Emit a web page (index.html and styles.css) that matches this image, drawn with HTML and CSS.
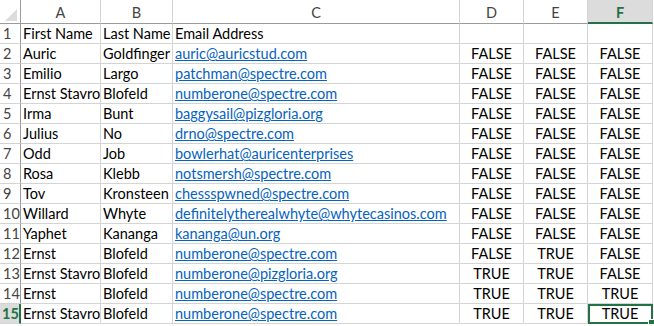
FILE: index.html
```html
<!DOCTYPE html>
<html>
<head>
<meta charset="utf-8">
<link rel="stylesheet" href="styles.css">
</head>
<body>
<div class="sheet">
  <div class="hd corner"><svg width="20" height="23" viewBox="0 0 20 23"><polygon points="17,9 17,21 5,21" fill="#dcdcdc"/></svg></div>
  <div class="hd col">A</div>
  <div class="hd col">B</div>
  <div class="hd col">C</div>
  <div class="hd col">D</div>
  <div class="hd col">E</div>
  <div class="hd col sel">F</div>

  <div class="rh">1</div><div class="c">First Name</div><div class="c">Last Name</div><div class="c">Email Address</div><div class="c"></div><div class="c"></div><div class="c"></div>
  <div class="rh">2</div><div class="c">Auric</div><div class="c">Goldfinger</div><div class="c"><span class="lnk">auric@auricstud.com</span></div><div class="c b">FALSE</div><div class="c b">FALSE</div><div class="c b">FALSE</div>
  <div class="rh">3</div><div class="c">Emilio</div><div class="c">Largo</div><div class="c"><span class="lnk">patchman@spectre.com</span></div><div class="c b">FALSE</div><div class="c b">FALSE</div><div class="c b">FALSE</div>
  <div class="rh">4</div><div class="c">Ernst Stavro</div><div class="c">Blofeld</div><div class="c"><span class="lnk">numberone@spectre.com</span></div><div class="c b">FALSE</div><div class="c b">FALSE</div><div class="c b">FALSE</div>
  <div class="rh">5</div><div class="c">Irma</div><div class="c">Bunt</div><div class="c"><span class="lnk">baggysail@pizgloria.org</span></div><div class="c b">FALSE</div><div class="c b">FALSE</div><div class="c b">FALSE</div>
  <div class="rh">6</div><div class="c">Julius</div><div class="c">No</div><div class="c"><span class="lnk">drno@spectre.com</span></div><div class="c b">FALSE</div><div class="c b">FALSE</div><div class="c b">FALSE</div>
  <div class="rh">7</div><div class="c">Odd</div><div class="c">Job</div><div class="c"><span class="lnk">bowlerhat@auricenterprises</span></div><div class="c b">FALSE</div><div class="c b">FALSE</div><div class="c b">FALSE</div>
  <div class="rh">8</div><div class="c">Rosa</div><div class="c">Klebb</div><div class="c"><span class="lnk">notsmersh@spectre.com</span></div><div class="c b">FALSE</div><div class="c b">FALSE</div><div class="c b">FALSE</div>
  <div class="rh">9</div><div class="c">Tov</div><div class="c">Kronsteen</div><div class="c"><span class="lnk">chessspwned@spectre.com</span></div><div class="c b">FALSE</div><div class="c b">FALSE</div><div class="c b">FALSE</div>
  <div class="rh">10</div><div class="c">Willard</div><div class="c">Whyte</div><div class="c"><span class="lnk">definitelytherealwhyte@whytecasinos.com</span></div><div class="c b">FALSE</div><div class="c b">FALSE</div><div class="c b">FALSE</div>
  <div class="rh">11</div><div class="c">Yaphet</div><div class="c">Kananga</div><div class="c"><span class="lnk">kananga@un.org</span></div><div class="c b">FALSE</div><div class="c b">FALSE</div><div class="c b">FALSE</div>
  <div class="rh">12</div><div class="c">Ernst</div><div class="c">Blofeld</div><div class="c"><span class="lnk">numberone@spectre.com</span></div><div class="c b">FALSE</div><div class="c b">TRUE</div><div class="c b">FALSE</div>
  <div class="rh">13</div><div class="c">Ernst Stavro</div><div class="c">Blofeld</div><div class="c"><span class="lnk">numberone@pizgloria.org</span></div><div class="c b">TRUE</div><div class="c b">TRUE</div><div class="c b">FALSE</div>
  <div class="rh">14</div><div class="c">Ernst</div><div class="c">Blofeld</div><div class="c"><span class="lnk">numberone@spectre.com</span></div><div class="c b">TRUE</div><div class="c b">TRUE</div><div class="c b">TRUE</div>
  <div class="rh selr">15</div><div class="c">Ernst Stavro</div><div class="c">Blofeld</div><div class="c"><span class="lnk">numberone@spectre.com</span></div><div class="c b">TRUE</div><div class="c b">TRUE</div><div class="c b active">TRUE<span class="handle"></span></div>
</div>
</body>
</html>
```
FILE: styles.css
```css
html, body {
  margin: 0;
  padding: 0;
  background: #ffffff;
}
.sheet {
  display: grid;
  grid-template-columns: 21px 80px 72px 287px 64px 64px 65px;
  grid-template-rows: 24px repeat(15, 20px);
  font-family: Lato, "Open Sans", sans-serif;
  font-size: 14.5px;
  color: #000;
  width: 654px;
}
.hd, .rh, .c {
  box-sizing: border-box;
  overflow: visible;
  white-space: nowrap;
}
.hd {
  border-right: 1px solid #d4d4d4;
  border-bottom: 1px solid #9b9b9b;
  color: #444;
  text-align: center;
  line-height: 22px;
  padding-top: 2px;
}
.corner {
  border-right: 1px solid #9b9b9b;
  padding: 0;
  line-height: 0;
}
.corner svg { display: block; }
.hd.sel {
  background: #dcdcdc;
  color: #217346;
  font-weight: bold;
  border-bottom: 2px solid #217346;
  line-height: 21px;
}
.rh {
  border-right: 1px solid #9b9b9b;
  border-bottom: 1px solid #d4d4d4;
  color: #444;
  padding-left: 3px;
  line-height: 20px;
}
.rh.selr {
  background: #dcdcdc;
  color: #217346;
  font-weight: bold;
  border-right: 2px solid #217346;
  padding-left: 2px;
}
.c {
  border-right: 1px solid #d4d4d4;
  border-bottom: 1px solid #d4d4d4;
  padding-left: 2px;
  line-height: 20px;
  position: relative;
}
.c.b {
  text-align: center;
  padding-left: 0;
}
.lnk {
  color: #0563c1;
  text-decoration: underline;
}
.active {
  outline: 2px solid #217346;
  outline-offset: -2px;
  z-index: 2;
}
.handle {
  position: absolute;
  right: -3px;
  bottom: -3px;
  width: 5px;
  height: 5px;
  background: #217346;
  border: 1px solid #fff;
}
```
